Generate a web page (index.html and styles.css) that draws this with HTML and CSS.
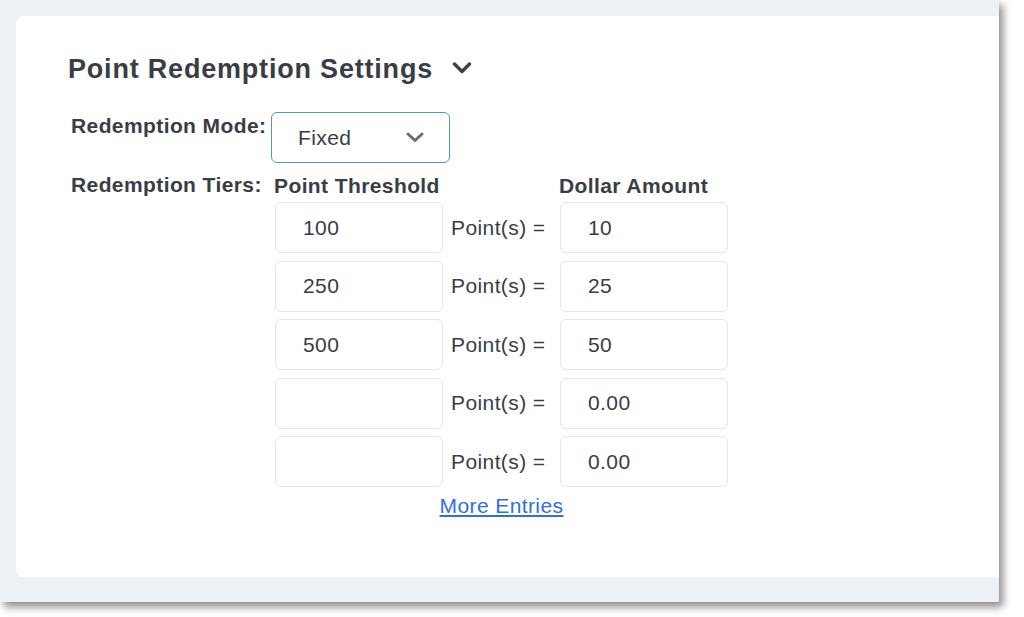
FILE: index.html
```html
<!DOCTYPE html>
<html lang="en">
<head>
<meta charset="utf-8">
<title>Point Redemption Settings</title>
<link rel="stylesheet" href="styles.css">
</head>
<body>
<div class="page">
<div class="frame">
  <div class="card">
    <div class="title-row">
      <h2 class="title">Point Redemption Settings</h2>
      <svg class="title-chevron" width="20" height="12" viewBox="0 0 20 12"><polyline points="2.5,2 10,9.5 17.5,2" fill="none" stroke="#3d4046" stroke-width="3.4" stroke-linecap="round" stroke-linejoin="round"/></svg>
    </div>

    <div class="form-row">
      <div class="label">Redemption Mode:</div>
      <div class="select">
        <span class="select-value">Fixed</span>
        <svg class="select-chevron" width="18" height="11" viewBox="0 0 18 11"><polyline points="2,2 9,8.5 16,2" fill="none" stroke="#6a6e75" stroke-width="3" stroke-linecap="round" stroke-linejoin="round"/></svg>
      </div>
    </div>

    <div class="form-row tiers-row">
      <div class="label">Redemption Tiers:</div>
      <div class="tiers">
        <div class="tiers-head">
          <div class="head-left">Point Threshold</div>
          <div class="head-right">Dollar Amount</div>
        </div>
        <div class="tier">
          <div class="field">100</div>
          <div class="eq">Point(s) =</div>
          <div class="field">10</div>
        </div>
        <div class="tier">
          <div class="field">250</div>
          <div class="eq">Point(s) =</div>
          <div class="field">25</div>
        </div>
        <div class="tier">
          <div class="field">500</div>
          <div class="eq">Point(s) =</div>
          <div class="field">50</div>
        </div>
        <div class="tier">
          <div class="field"></div>
          <div class="eq">Point(s) =</div>
          <div class="field">0.00</div>
        </div>
        <div class="tier">
          <div class="field"></div>
          <div class="eq">Point(s) =</div>
          <div class="field">0.00</div>
        </div>
        <div class="more">
          <a href="#" class="more-link">More Entries</a>
        </div>
      </div>
    </div>
  </div>
</div>
</div>
</body>
</html>
```

FILE: styles.css
```css
* { box-sizing: border-box; }

html, body {
  margin: 0;
  padding: 0;
  background: #ffffff;
  font-family: "Liberation Sans", Arial, sans-serif;
  color: #3a3d44;
  letter-spacing: 0.4px;
}

.page {
  width: 1024px;
  height: 617px;
  background: #ffffff;
  overflow: hidden;
}

.frame {
  width: 999px;
  height: 602px;
  background: #edf0f4;
  padding: 16px 0 25px 16px;
  display: flex;
  flex-direction: column;
  box-shadow: 4px 5px 8px rgba(0, 0, 0, 0.45);
}

.card {
  flex: 1;
  background: #ffffff;
  border-radius: 8px 0 0 8px;
  padding: 37px 0 0 52px;
}

.title-row {
  display: flex;
  align-items: center;
  gap: 19px;
  height: 32px;
  margin-bottom: 27px;
}

.title {
  margin: 0;
  font-size: 27px;
  line-height: 32px;
  font-weight: 700;
  letter-spacing: 0.8px;
  color: #3a3d44;
}

.title-chevron {
  display: block;
  margin-top: -3px;
}

.form-row {
  display: flex;
  align-items: flex-start;
}

.label {
  width: 200px;
  margin-left: 3px;
  padding-top: 2px;
  font-size: 21px;
  line-height: 24px;
  font-weight: 700;
  color: #3a3d44;
}

.tiers-row .label {
  padding-top: 0;
  margin-top: -1px;
}

.select {
  width: 179px;
  height: 51px;
  border: 1px solid #5b8ed8;
  border-radius: 6px;
  display: flex;
  align-items: center;
  justify-content: space-between;
  padding: 0 25px 0 26px;
}

.select-value {
  font-size: 21px;
  line-height: 24px;
  color: #3a3d44;
  margin-top: 1px;
}

.select-chevron {
  display: block;
}

.tiers-row {
  margin-top: 11px;
}

.tiers {
  width: 457px;
}

.tiers-head {
  display: flex;
  font-size: 21px;
  line-height: 24px;
  font-weight: 700;
  color: #3a3d44;
  margin-bottom: 4px;
  padding-left: 3px;
}

.head-left {
  width: 285px;
}

.tier {
  display: flex;
  align-items: center;
  padding-left: 4px;
  margin-bottom: 7.5px;
}

.field {
  width: 168px;
  height: 51px;
  border: 1px solid #e3e5e9;
  border-radius: 6px;
  padding-left: 27px;
  display: flex;
  align-items: center;
  font-size: 21px;
  color: #3a3d44;
}

.eq {
  width: 117px;
  padding-left: 8px;
  font-size: 21px;
  color: #3a3d44;
}

.more {
  padding-left: 4px;
  text-align: center;
  margin-top: -1px;
  font-size: 21px;
  line-height: 24px;
}

.more-link {
  color: #2f6fde;
  text-decoration: underline;
  text-underline-offset: 2px;
}
```
